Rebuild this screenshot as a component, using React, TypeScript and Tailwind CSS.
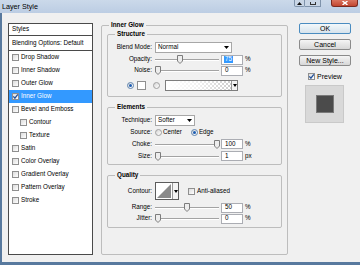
import type { ReactNode } from 'react';

const Check = ({ checked = false }: { checked?: boolean }) => (
  <span className="flex h-[7px] w-[7px] shrink-0 items-center justify-center border border-[#8f8f8f] bg-gradient-to-br from-[#dcdcdc] to-white">
    {checked && (
      <svg width="7" height="7" viewBox="0 0 7 7" className="-m-px">
        <path d="M1.3 3.4 L2.9 5.2 L5.8 1.3" fill="none" stroke="#23529c" strokeWidth="1.3" />
      </svg>
    )}
  </span>
);

const Radio = ({ on = false }: { on?: boolean }) => (
  <span
    className={`flex h-[7px] w-[7px] shrink-0 items-center justify-center rounded-full border bg-gradient-to-br from-[#d6d6d6] to-white ${
      on ? 'border-[#5f84ad]' : 'border-[#a0a0a0]'
    }`}
  >
    {on && <span className="h-[3px] w-[3px] rounded-full bg-[#1d5db3]" />}
  </span>
);

const Arrow = () => (
  <svg width="5" height="3" viewBox="0 0 5 3" className="shrink-0">
    <path d="M0 0H5L2.5 3Z" fill="#000" />
  </svg>
);

const Select = ({ value, className }: { value: string; className: string }) => (
  <div className={`ml-[3px] flex h-[11px] items-center justify-between border border-[#a7a7a7] bg-white pl-[2px] pr-[2px] ${className}`}>
    <span>{value}</span>
    <Arrow />
  </div>
);

const Slider = ({ at }: { at: number }) => (
  <div className="relative h-[9px] w-[64px] shrink-0">
    <div className="absolute inset-x-0 top-[4px] h-[2px] border-t border-[#a3a3a3] bg-white" />
    <svg className="absolute top-0" style={{ left: at }} width="6" height="9" viewBox="0 0 6 9">
      <path d="M0.5 0.5H5.5V6L3 8.5L0.5 6Z" fill="#ededed" stroke="#7c7c7c" />
    </svg>
  </div>
);

const SliderRow = ({
  label,
  at,
  value,
  unit,
  selected = false,
  className = '',
}: {
  label: string;
  at: number;
  value: string;
  unit: string;
  selected?: boolean;
  className?: string;
}) => (
  <div className={`flex h-[11px] items-center ${className}`}>
    <span className="w-[44px] shrink-0 text-right">{label}</span>
    <div className="ml-[3px] flex items-center">
      <Slider at={at} />
      <div className="ml-[2px] flex h-[10px] w-[22px] items-center border border-[#abadb3] bg-white pl-[2px]">
        <span className={selected ? 'bg-[#3399ff] px-px text-white' : 'pl-px'}>{value}</span>
      </div>
      <span className="ml-[2px]">{unit}</span>
    </div>
  </div>
);

const Group = ({ title, children, className = '' }: { title: string; children: ReactNode; className?: string }) => (
  <fieldset className={`rounded-[2px] border border-[#bdbdbd] ${className}`}>
    <legend className="ml-[7px] px-[2px] font-bold leading-[8px]">{title}</legend>
    {children}
  </fieldset>
);

const Button = ({ children, primary = false }: { children: ReactNode; primary?: boolean }) => (
  <div
    className={`flex h-[11px] items-center justify-center rounded-[2px] border bg-gradient-to-b ${
      primary ? 'border-[#4a8cc0] from-[#f3f8fb] to-[#d6e3ec]' : 'border-[#8b8b8b] from-[#f5f5f5] to-[#d7d7d7]'
    }`}
  >
    {children}
  </div>
);

const styleItems = [
  { label: 'Drop Shadow' },
  { label: 'Inner Shadow' },
  { label: 'Outer Glow' },
  { label: 'Inner Glow', checked: true, active: true },
  { label: 'Bevel and Emboss' },
  { label: 'Contour', sub: true },
  { label: 'Texture', sub: true },
  { label: 'Satin' },
  { label: 'Color Overlay' },
  { label: 'Gradient Overlay' },
  { label: 'Pattern Overlay' },
  { label: 'Stroke' },
];

export default function App() {
  return (
    <div className="flex h-[265px] w-[360px] flex-col overflow-hidden bg-[#f0f0f0] font-['Liberation_Sans',Arial,sans-serif] text-[6.3px] leading-none text-black">
      {/* title bar */}
      <div className="flex h-[13px] shrink-0 items-start justify-between bg-gradient-to-b from-[#cbd9ea] to-[#bccde3]">
        <span className="pl-[2px] pt-[3px] text-[7.2px] text-black">Layer Style</span>
        <div className="flex items-start pr-[2px]">
          <div className="flex h-[7px] w-[11px] items-end justify-center rounded-b-[2px] border border-t-0 border-[#7f93ab] bg-[#c9d6e6] pb-[1px]">
            <svg width="5" height="3" viewBox="0 0 5 3">
              <path d="M0 3L2.5 0L5 3Z" fill="#111" />
            </svg>
          </div>
          <div className="flex h-[7px] w-[16px] items-end justify-center border border-l-0 border-t-0 border-[#7f93ab] bg-[#c9d6e6] pb-[1px]">
            <span className="h-[3px] w-[6px] border border-t-0 border-[#333]" />
          </div>
          <div className="ml-[10px] flex h-[7px] w-[27px] items-end justify-center rounded-b-[3px] border border-t-0 border-[#7b2a20] bg-gradient-to-b from-[#d9735f] to-[#c2452f] pb-[1px]">
            <svg width="6" height="4" viewBox="0 0 6 4">
              <path d="M0.5 0L5.5 4M5.5 0L0.5 4" stroke="#fff" strokeWidth="1.4" />
            </svg>
          </div>
        </div>
      </div>

      {/* dialog body */}
      <div className="flex flex-1 items-start border-b-[3px] border-l-2 border-[#58799e] pl-[6px] pt-[8px]">
        {/* styles list */}
        <div className="mt-[2px] h-[232px] w-[85px] shrink-0 border border-[#4a4a4a] bg-white">
          <div className="flex h-[12px] items-center border-b border-[#4a4a4a] pl-[3px]">Styles</div>
          <div className="flex h-[15px] items-center border-b border-[#4a4a4a] pl-[3px]">Blending Options: Default</div>
          {styleItems.map((item) => (
            <div
              key={item.label}
              className={`flex h-[13px] items-center gap-[2px] ${item.sub ? 'pl-[11px]' : 'pl-[3px]'} ${
                item.active ? 'bg-[#3399ff] text-white' : ''
              }`}
            >
              <Check checked={item.checked} />
              <span>{item.label}</span>
            </div>
          ))}
        </div>

        {/* inner glow settings */}
        <Group title="Inner Glow" className="ml-[8px] h-[234px] w-[187px] shrink-0">
          <div className="flex flex-col px-[5px] pt-[1px]">
            <Group title="Structure">
              <div className="mt-[4px] flex h-[11px] items-center">
                <span className="w-[44px] shrink-0 text-right">Blend Mode:</span>
                <Select value="Normal" className="w-[77px]" />
              </div>
              <SliderRow label="Opacity:" at={22} value="75" unit="%" selected className="mt-[1px]" />
              <SliderRow label="Noise:" at={0} value="0" unit="%" />
              <div className="mb-[5px] mt-[3px] flex h-[12px] items-center">
                <span className="ml-[19px]">
                  <Radio on />
                </span>
                <span className="ml-[3px] h-[9px] w-[9px] border border-[#8f8f8f] bg-white" />
                <span className="ml-[7px]">
                  <Radio />
                </span>
                <div className="ml-[5px] flex h-[11px] w-[73px] border border-[#7d7d7d] bg-white">
                  <div className="flex-1 bg-[image:repeating-conic-gradient(#cdcdcd_0%_25%,#ffffff_0%_50%)] bg-[length:4px_4px]">
                    <div className="h-full w-full bg-gradient-to-r from-white via-white/70 to-white/0" />
                  </div>
                  <div className="flex w-[6px] items-center justify-center border-l border-[#9a9a9a] bg-[#f4f4f4]">
                    <svg width="4" height="3" viewBox="0 0 4 3">
                      <path d="M0 0H4L2 3Z" fill="#000" />
                    </svg>
                  </div>
                </div>
              </div>
            </Group>

            <Group title="Elements" className="mt-[6px]">
              <div className="mt-[4px] flex h-[11px] items-center">
                <span className="w-[44px] shrink-0 text-right">Technique:</span>
                <Select value="Softer" className="w-[40px]" />
              </div>
              <div className="flex h-[12px] items-center">
                <span className="w-[44px] shrink-0 text-right">Source:</span>
                <span className="ml-[3px]">
                  <Radio />
                </span>
                <span className="ml-[1px]">Center</span>
                <span className="ml-[9px]">
                  <Radio on />
                </span>
                <span className="ml-[1px]">Edge</span>
              </div>
              <SliderRow label="Choke:" at={59} value="100" unit="%" className="h-[12px]" />
              <SliderRow label="Size:" at={0} value="1" unit="px" className="mb-[2px] h-[12px]" />
            </Group>

            <Group title="Quality" className="mt-[6px]">
              <div className="mt-[3px] flex h-[18px] items-center">
                <span className="w-[44px] shrink-0 text-right">Contour:</span>
                <div className="ml-[3px] flex h-[18px] w-[24px] border border-[#5c5c5c] bg-white">
                  <svg width="16" height="16" viewBox="0 0 16 16" className="shrink-0">
                    <rect x="0" y="0" width="16" height="16" fill="#fff" />
                    <path d="M1 15L15 1V15Z" fill="#8a8a8a" />
                  </svg>
                  <div className="flex flex-1 items-center justify-center border-l border-[#9a9a9a] bg-[#f4f4f4]">
                    <svg width="4" height="3" viewBox="0 0 4 3">
                      <path d="M0 0H4L2 3Z" fill="#000" />
                    </svg>
                  </div>
                </div>
                <span className="ml-[9px]">
                  <Check />
                </span>
                <span className="ml-[2px]">Anti-aliased</span>
              </div>
              <SliderRow label="Range:" at={29} value="50" unit="%" className="mt-[2px]" />
              <SliderRow label="Jitter:" at={0} value="0" unit="%" className="mb-[3px]" />
            </Group>
          </div>
        </Group>

        {/* buttons */}
        <div className="ml-[11px] mt-[2px] flex w-[52px] shrink-0 flex-col gap-[5px] text-[7px]">
          <Button primary>OK</Button>
          <Button>Cancel</Button>
          <Button>New Style...</Button>
          <div className="mt-px flex h-[8px] items-center gap-[2px] pl-[9px]">
            <Check checked />
            <span>Preview</span>
          </div>
          <div className="ml-[6px] flex h-[38px] w-[39px] items-center justify-center border border-[#c9c9c9] bg-[#d9d9d9]">
            <span className="h-[18px] w-[18px] border border-[#7a7a7a] bg-[#4b4b4b]" />
          </div>
        </div>
      </div>
    </div>
  );
}
